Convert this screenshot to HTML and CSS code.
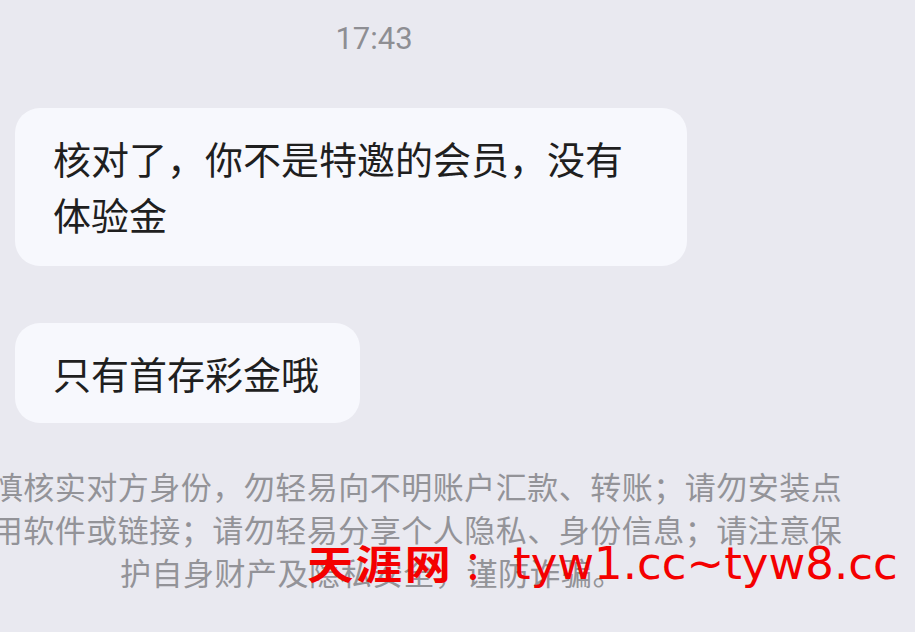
FILE: index.html
```html
<!DOCTYPE html>
<html lang="zh-CN">
<head>
<meta charset="utf-8">
<title>聊天</title>
<link rel="stylesheet" href="styles.css">
</head>
<body>
<div class="screen">
  <div class="chat">
    <div class="time">17:43</div>
    <div class="msgs">
      <div class="bubble bubble-wide">核对了，你不是特邀的会员，没有体验金</div>
      <div class="bubble">只有首存彩金哦</div>
    </div>
    <div class="notice">
      <span class="nline">慎核实对方身份，勿轻易向不明账户汇款、转账；请勿安装点</span>
      <span class="nline">用软件或链接；请勿轻易分享个人隐私、身份信息；请注意保</span>
      <span class="nline nline-last">护自身财产及隐私安全，谨防诈骗。</span>
    </div>
  </div>
  <div class="watermark">
    <span class="wm-cn">天涯网</span><span class="wm-colon">：</span><span class="wm-url">tyw1.cc~tyw8.cc</span>
  </div>
</div>
</body>
</html>
```
FILE: styles.css
```css
html, body {
  margin: 0;
  padding: 0;
}
body {
  background: #e9e9f0;
  width: 915px;
  height: 632px;
  overflow: hidden;
  font-family: "Noto Sans CJK SC", "Noto Sans", sans-serif;
}
.screen {
  position: relative;
  width: 915px;
  height: 632px;
}
.chat {
  width: 748px;
  display: flex;
  flex-direction: column;
}
.time {
  margin-top: 19px;
  height: 40px;
  line-height: 40px;
  text-align: center;
  font-family: Roboto, "Liberation Sans", sans-serif;
  font-size: 31px;
  color: #8e8e93;
}
.msgs {
  margin-top: 49px;
  padding-left: 15px;
  display: flex;
  flex-direction: column;
  align-items: flex-start;
  gap: 57px;
}
.bubble {
  background: #f7f8fd;
  border-radius: 25px;
  padding: 22px 41px 22px 38px;
  font-size: 38px;
  line-height: 56px;
  color: #1f1f1f;
  max-width: 596px;
}
.bubble-wide {
  width: 596px;
  padding-right: 38px;
  padding-bottom: 24px;
}
.notice {
  margin-top: 41px;
  margin-left: -8px;
  width: 850px;
  display: flex;
  flex-direction: column;
  align-items: center;
  font-size: 31px;
  letter-spacing: 0.5px;
  line-height: 43px;
  color: #939398;
  white-space: nowrap;
}
.nline {
  display: block;
}
.nline-last {
  padding-right: 90px;
}
.watermark {
  position: absolute;
  left: 307px;
  top: 537px;
  display: flex;
  align-items: baseline;
  color: #f40000;
  line-height: 50px;
}
.wm-cn {
  display: inline-block;
  font-size: 40px;
  font-weight: 700;
  letter-spacing: 2px;
  transform: scaleX(1.16);
  transform-origin: left center;
  margin-right: 20px;
}
.wm-colon {
  font-size: 40px;
  margin-left: 10px;
  margin-right: 10px;
}
.wm-url {
  font-family: "DejaVu Sans", sans-serif;
  font-size: 45px;
}
```
